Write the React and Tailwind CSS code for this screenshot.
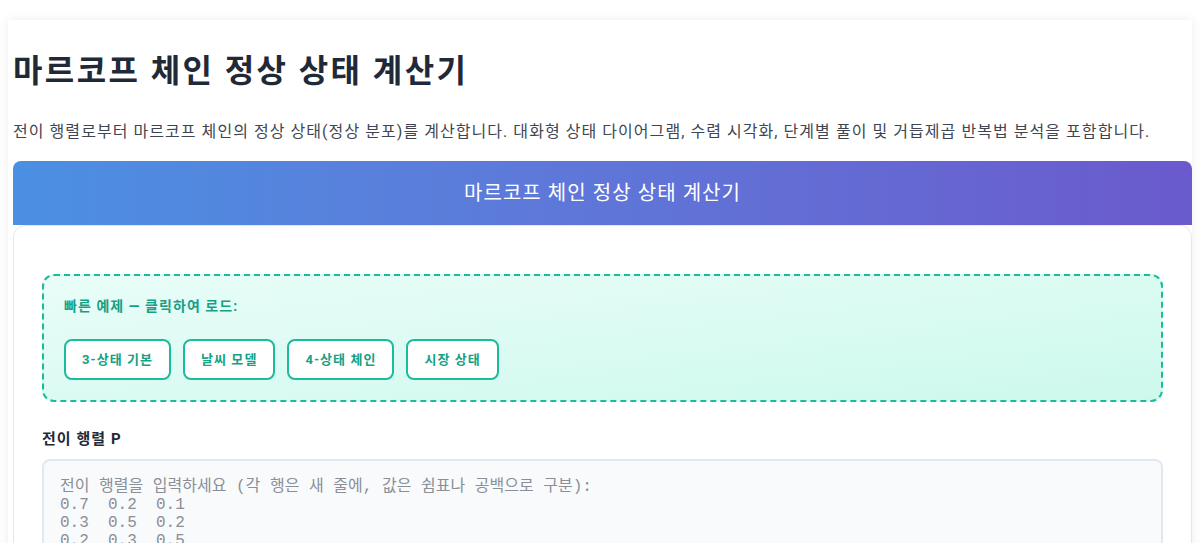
import React from "react";

const examples = ["3-상태 기본", "날씨 모델", "4-상태 체인", "시장 상태"];

const placeholder =
  "전이 행렬을 입력하세요 (각 행은 새 줄에, 값은 쉼표나 공백으로 구분):\n0.7  0.2  0.1\n0.3  0.5  0.2\n0.2  0.3  0.5";

export default function App() {
  return (
    <div className="min-h-screen bg-white pt-5 px-2 tracking-[0.066em] font-['Roboto','Noto_Sans_CJK_KR',sans-serif]">
      <div className="bg-white pl-[5px] pt-8 shadow-[0_0_10px_rgba(0,0,0,0.08)]">
        <h1 className="text-[32px] leading-[1.2] font-bold tracking-[0.075em] text-[#1f2937]">
          마르코프 체인 정상 상태 계산기
        </h1>
        <p className="mt-[30px] text-base leading-6 text-[#3f4652]">
          전이 행렬로부터 마르코프 체인의 정상 상태(정상 분포)를 계산합니다. 대화형 상태 다이어그램, 수렴 시각화, 단계별 풀이 및 거듭제곱 반복법 분석을 포함합니다.
        </p>

        <div className="mt-[17px] h-16 rounded-t-lg bg-gradient-to-r from-[#4a90e2] to-[#6a5acd] flex items-center justify-center">
          <h2 className="text-xl text-white">마르코프 체인 정상 상태 계산기</h2>
        </div>

        <div className="border border-[#e5e7eb] rounded-t-xl bg-white px-[28px] pt-[48px] pb-10">
          <div className="rounded-xl border-2 border-dashed border-[#1abc9c] bg-gradient-to-br from-[#e9fdf8] to-[#cdf9ec] p-5">
            <div className="text-sm leading-[21px] font-bold text-[#16a085]">빠른 예제 — 클릭하여 로드:</div>
            <div className="mt-[22px] flex gap-3">
              {examples.map((ex) => (
                <button
                  key={ex}
                  className="rounded-lg border-2 border-[#1abc9c] bg-white px-4 py-[9px] text-[13px] leading-[19px] font-bold text-[#16a085]"
                >
                  {ex}
                </button>
              ))}
            </div>
          </div>

          <label className="block mt-[27px] mb-[9px] text-[15px] leading-[21px] font-bold text-[#1f2937]">
            전이 행렬 P
          </label>
          <textarea
            rows={7}
            placeholder={placeholder}
            className="block w-full resize-none rounded-lg border-2 border-[#e2e8f0] bg-[#f8fafc] px-4 pt-[17px] text-base leading-[18px] tracking-normal font-['Liberation_Mono','Noto_Sans_CJK_KR',monospace] placeholder:text-[#8a8f98] outline-none"
          />
        </div>
      </div>
    </div>
  );
}
